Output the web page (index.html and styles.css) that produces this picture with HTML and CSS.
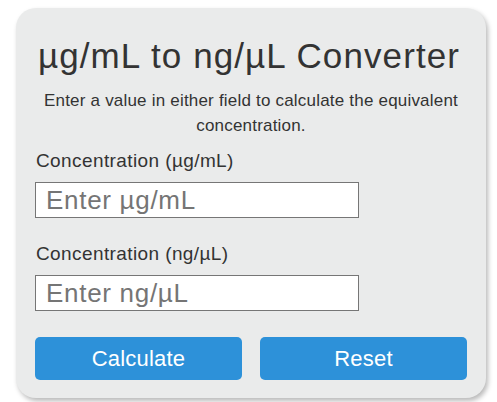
FILE: index.html
```html
<!DOCTYPE html>
<html>
<head>
<meta charset="utf-8">
<link rel="stylesheet" href="styles.css">
</head>
<body>
<div class="card">
  <h1 class="title">µg/mL to ng/µL Converter</h1>
  <p class="subtitle">Enter a value in either field to calculate the equivalent concentration.</p>
  <div class="field">
    <label class="label" for="ug">Concentration (µg/mL)</label>
    <input class="input" id="ug" type="text" placeholder="Enter µg/mL">
  </div>
  <div class="field">
    <label class="label" for="ng">Concentration (ng/µL)</label>
    <input class="input" id="ng" type="text" placeholder="Enter ng/µL">
  </div>
  <div class="buttons">
    <button class="btn">Calculate</button>
    <button class="btn">Reset</button>
  </div>
</div>
</body>
</html>
```
FILE: styles.css
```css
html, body {
  margin: 0;
  padding: 0;
  background: #ffffff;
}
body {
  padding: 8px 11px 4px 16px;
  font-family: "Liberation Sans", Arial, sans-serif;
  color: #333333;
}
.card {
  box-sizing: border-box;
  width: 470px;
  background: #eaebeb;
  border-radius: 20px;
  box-shadow: 2px 3px 5px rgba(0, 0, 0, 0.28);
  padding: 26px 19px 18px 19px;
}
.title {
  margin: 0 4px 0 0;
  font-size: 35px;
  letter-spacing: 1.1px;
  font-weight: normal;
  text-align: center;
  line-height: 44px;
  color: #333333;
}
.subtitle {
  margin: 10px 0 11px;
  font-size: 17px;
  letter-spacing: 0.2px;
  line-height: 25px;
  text-align: center;
}
.field {
  display: flex;
  flex-direction: column;
  align-items: flex-start;
  margin-bottom: 24px;
}
.field:last-of-type {
  margin-bottom: 0;
}
.label {
  font-size: 19px;
  letter-spacing: 0.4px;
  line-height: 24px;
  margin-bottom: 9px;
  padding-left: 1px;
}
.input {
  box-sizing: border-box;
  width: 75%;
  height: 36px;
  margin: 0;
  border: 1px solid #767676;
  border-radius: 0;
  background: #ffffff;
  padding: 0 10px;
  font-family: "Liberation Sans", Arial, sans-serif;
  font-size: 26px;
  letter-spacing: 0.7px;
  color: #333333;
}
.input::placeholder {
  color: #757575;
}
.buttons {
  display: flex;
  gap: 18px;
  margin-top: 26px;
}
.btn {
  flex: 1;
  height: 43px;
  border: none;
  border-radius: 5px;
  background: #2d91d9;
  color: #ffffff;
  font-family: "Liberation Sans", Arial, sans-serif;
  font-size: 22px;
  letter-spacing: 0.2px;
}
```
